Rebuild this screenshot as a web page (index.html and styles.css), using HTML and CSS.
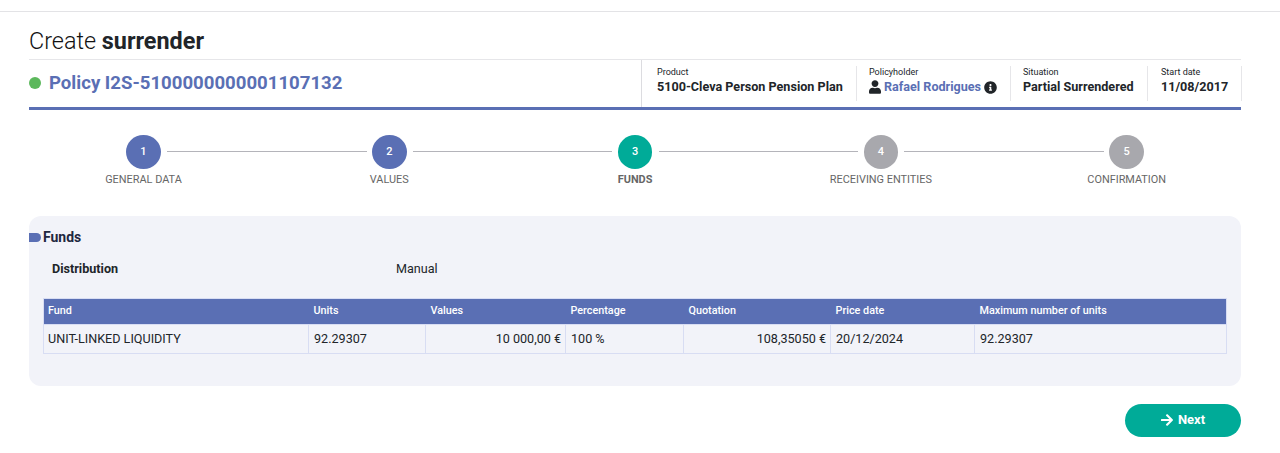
FILE: index.html
```html
<!DOCTYPE html>
<html lang="en">
<head>
    <meta charset="UTF-8">
    <title>Create surrender</title>
    <link rel="stylesheet" href="styles.css">
</head>
<body>
  <div class="topbar"></div>
  <div class="page">
    <h1>Create <strong>surrender</strong></h1>

    <div class="policy">
      <div class="policy-name"><span class="dot"></span>Policy I2S-5100000000001107132</div>
      <div class="info info-product">
        <span class="info-label">Product</span>
        <span class="info-value">5100-Cleva Person Pension Plan</span>
      </div>
      <div class="info info-holder">
        <span class="info-label">Policyholder</span>
        <span class="info-value">
          <svg class="icon-user" viewBox="0 0 448 512"><path d="M224 256c70.7 0 128-57.3 128-128S294.7 0 224 0 96 57.3 96 128s57.3 128 128 128zm89.6 32h-16.7c-22.2 10.2-46.9 16-72.9 16s-50.6-5.8-72.9-16h-16.7C60.2 288 0 348.2 0 422.4V464c0 26.5 21.5 48 48 48h352c26.5 0 48-21.5 48-48v-41.6c0-74.2-60.2-134.4-134.4-134.4z"/></svg>
          <a class="holder-link">Rafael Rodrigues</a>
          <svg class="icon-info" viewBox="0 0 512 512"><path d="M256 8C119 8 8 119.1 8 256c0 137 111 248 248 248s248-111 248-248C504 119.1 393 8 256 8zm0 110c23.2 0 42 18.8 42 42s-18.8 42-42 42-42-18.8-42-42 18.8-42 42-42zm56 254c0 6.6-5.4 12-12 12h-88c-6.6 0-12-5.4-12-12v-24c0-6.6 5.4-12 12-12h12v-64h-12c-6.6 0-12-5.4-12-12v-24c0-6.6 5.4-12 12-12h64c6.6 0 12 5.4 12 12v100h12c6.6 0 12 5.4 12 12v24z"/></svg>
        </span>
      </div>
      <div class="info info-situation">
        <span class="info-label">Situation</span>
        <span class="info-value">Partial Surrendered</span>
      </div>
      <div class="info info-date">
        <span class="info-label">Start date</span>
        <span class="info-value">11/08/2017</span>
      </div>
    </div>

    <div class="stepper">
      <div class="step done"><span class="circle">1</span><span class="step-label">GENERAL DATA</span></div>
      <div class="step done"><span class="circle">2</span><span class="step-label">VALUES</span></div>
      <div class="step active"><span class="circle">3</span><span class="step-label">FUNDS</span></div>
      <div class="step"><span class="circle">4</span><span class="step-label">RECEIVING ENTITIES</span></div>
      <div class="step"><span class="circle">5</span><span class="step-label">CONFIRMATION</span></div>
    </div>

    <div class="panel">
      <h2><span class="marker"></span>Funds</h2>
      <div class="field">
        <span class="field-label">Distribution</span>
        <span class="field-value">Manual</span>
      </div>
      <table class="funds">
        <colgroup>
          <col class="col-fund"><col class="col-units"><col class="col-values"><col class="col-pct">
          <col class="col-quote"><col class="col-date"><col class="col-max">
        </colgroup>
        <thead>
          <tr>
            <th>Fund</th><th>Units</th><th>Values</th><th>Percentage</th>
            <th>Quotation</th><th>Price date</th><th>Maximum number of units</th>
          </tr>
        </thead>
        <tbody>
          <tr>
            <td>UNIT-LINKED LIQUIDITY</td>
            <td>92.29307</td>
            <td class="num">10 000,00 €</td>
            <td>100 %</td>
            <td class="num">108,35050 €</td>
            <td>20/12/2024</td>
            <td>92.29307</td>
          </tr>
        </tbody>
      </table>
    </div>

    <div class="actions">
      <button class="btn-next">
        <svg class="icon-arrow" viewBox="0 0 448 512"><path d="M190.5 66.9l22.2-22.2c9.4-9.4 24.6-9.4 33.9 0L441 239c9.4 9.4 9.4 24.6 0 33.9L246.6 467.3c-9.4 9.4-24.6 9.4-33.9 0l-22.2-22.2c-9.5-9.5-9.3-25 .4-34.3L311.4 296H24c-13.3 0-24-10.7-24-24v-32c0-13.3 10.7-24 24-24h287.4L190.9 101.2c-9.8-9.3-10-24.8-.4-34.3z"/></svg>
        Next
      </button>
    </div>
  </div>
</body>
</html>
```

FILE: styles.css
```css
body {
  font-family: Roboto, "Liberation Sans", sans-serif;
  color: #212529;
  background: #fff;
  margin: 0;
  padding: 0;
}
.topbar {
  height: 11px;
  border-bottom: 1px solid #e3e3e6;
}
.page {
  width: 1212px;
  margin-left: 29px;
}
h1 {
  font-size: 23.4px;
  font-weight: 300;
  line-height: 28px;
  color: #111;
  margin: 15px 0 4px;
}
h1 strong {
  font-weight: 700;
  color: #212529;
}

/* policy header */
.policy {
  display: flex;
  align-items: stretch;
  height: 47px;
  border-top: 1px solid #e6e6e9;
  border-bottom: 3px solid #5a6fb4;
}
.policy-name {
  flex: 1;
  display: flex;
  align-items: center;
  font-size: 18.6px;
  font-weight: 700;
  color: #5a6fb4;
  padding-bottom: 2px;
}
.dot {
  width: 12px;
  height: 12px;
  border-radius: 50%;
  background: #5cb85c;
  margin-right: 8px;
}
.info {
  display: flex;
  flex-direction: column;
  box-sizing: border-box;
  flex: none;
  border-left: 1px solid #e6e6e9;
  padding: 1px 0 0 12px;
  margin: 6px 0 6px;
}
.info-product {
  width: 215px;
  padding: 7px 0 0 15px;
  margin: 0;
  border-left-color: #dcdce0;
}
.info-holder { width: 154px; }
.info-situation { width: 137px; }
.info-date {
  width: 95px;
  padding-left: 13px;
  margin-right: -1px;
  border-right: 1px solid #e6e6e9;
}
.info-label {
  font-size: 9px;
  line-height: 11px;
  color: #212529;
}
.info-value {
  display: flex;
  align-items: center;
  font-size: 12.6px;
  font-weight: 700;
  line-height: 18px;
  white-space: nowrap;
}
.holder-link {
  color: #5a6fb4;
  margin: 0 3px 0 3px;
}
.icon-user {
  width: 12px;
  height: 14px;
  fill: #212529;
}
.icon-info {
  width: 13px;
  height: 13px;
  fill: #212529;
}

/* stepper */
.stepper {
  display: grid;
  grid-template-columns: repeat(5, 1fr);
  width: 1229px;
  margin: 25px 0 0 -8.4px;
}
.step {
  position: relative;
  display: flex;
  flex-direction: column;
  align-items: center;
  color: #666;
}
.step:not(:last-child)::after {
  content: "";
  position: absolute;
  top: 16px;
  left: calc(50% + 23.5px);
  width: 199.5px;
  height: 1px;
  background: #b4b4ba;
}
.circle {
  display: flex;
  align-items: center;
  justify-content: center;
  box-sizing: border-box;
  width: 34.5px;
  height: 34px;
  padding-bottom: 2px;
  border-radius: 50%;
  background: #a8a8ad;
  color: #fff;
  font-size: 11px;
  font-weight: 500;
}
.step.done .circle { background: #5a6fb4; }
.step.active .circle { background: #00ab98; }
.step-label {
  font-size: 10.9px;
  line-height: 12px;
  margin-top: 5px;
}
.step.active .step-label {
  font-weight: 700;
}

/* funds panel */
.panel {
  background: #f2f3f9;
  border-radius: 12px;
  margin-top: 30px;
  height: 170px;
  box-sizing: border-box;
  padding-top: 13px;
}
h2 {
  display: flex;
  align-items: center;
  font-size: 14px;
  font-weight: 700;
  line-height: 16px;
  color: #1f2740;
  margin: 0;
}
.marker {
  width: 12px;
  height: 9px;
  background: #5a6fb4;
  border-radius: 0 5px 5px 0;
  margin-right: 2px;
}
.field {
  display: flex;
  font-size: 12.6px;
  line-height: 16px;
  margin: 16px 0 0 23px;
}
.field-label {
  width: 344px;
  font-weight: 700;
}
.funds {
  border-collapse: collapse;
  table-layout: fixed;
  width: 1184px;
  margin: 21px 0 0 14px;
  font-size: 12.6px;
}
.col-fund { width: 265px; }
.col-units { width: 117px; }
.col-values { width: 140px; }
.col-pct { width: 118px; }
.col-quote { width: 147px; }
.col-date { width: 144px; }
.funds th {
  background: #5a6fb4;
  color: #fff;
  font-size: 10.8px;
  font-weight: 500;
  text-align: left;
  height: 23px;
  padding: 0 5px 2px;
  border-top: 1px solid #d8ddf3;
}
.funds th:first-child {
  padding-left: 4px;
  border-left: 1px solid #d8ddf3;
}
.funds th:last-child { border-right: 1px solid #d8ddf3; }
.funds td {
  height: 27px;
  padding: 0 4px 1px 5px;
  border: 1px solid #d8ddf3;
}
.funds td:first-child { padding-left: 4px; }
.funds td.num {
  text-align: right;
}

/* next button */
.actions {
  display: flex;
  justify-content: flex-end;
  margin-top: 18px;
}
.btn-next {
  display: flex;
  align-items: center;
  justify-content: center;
  width: 116px;
  height: 33px;
  padding: 0 0 2px;
  border: none;
  border-radius: 17px;
  background: #00ab98;
  color: #fff;
  font-family: inherit;
  font-size: 13px;
  font-weight: 700;
}
.icon-arrow {
  width: 12px;
  height: 14px;
  fill: #fff;
  margin-right: 5px;
}
```
